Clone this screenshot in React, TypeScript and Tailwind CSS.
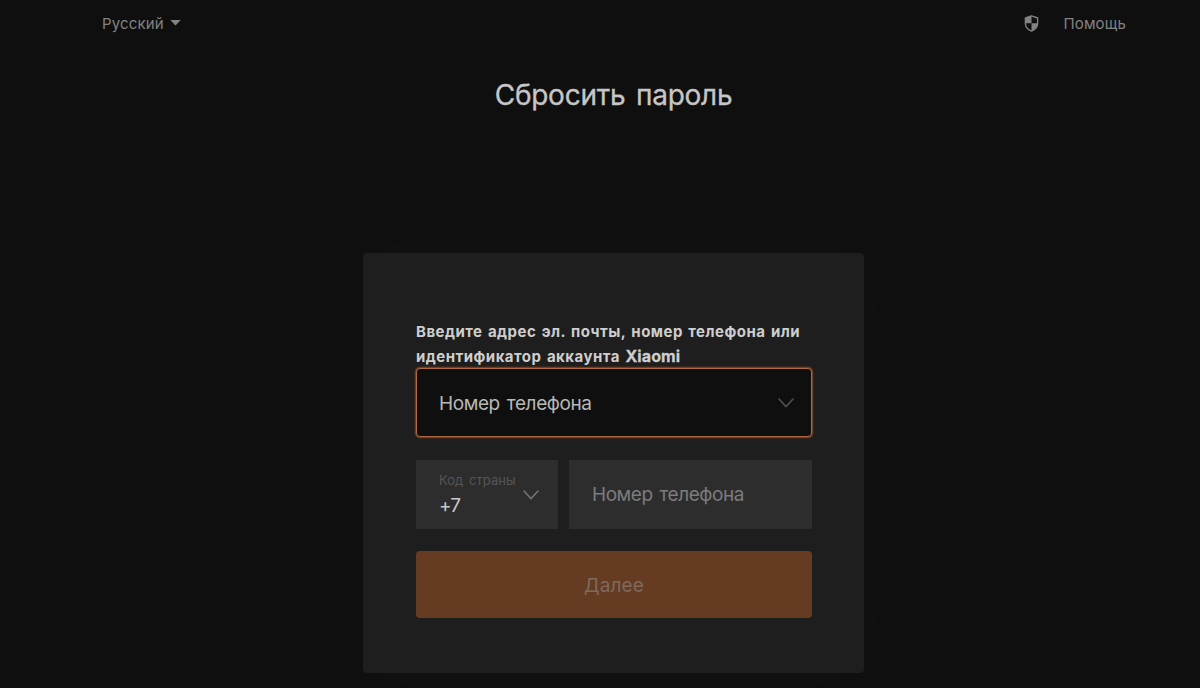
import React, { useState } from 'react';

const Chevron = () => (
  <svg
    width="16"
    height="10"
    viewBox="0 0 16 10"
    fill="none"
    stroke="currentColor"
    strokeWidth="1.6"
    strokeLinecap="round"
    strokeLinejoin="round"
  >
    <path d="M1 1L8 8.6L15 1" />
  </svg>
);

const ShieldIcon = () => (
  <svg className="relative -top-px" width="15" height="17" viewBox="0 0 14 17" fill="none">
    <path
      d="M7 0.9L13.1 3V8.4C13.1 12 10.4 14.7 7 16.1C3.6 14.7 0.9 12 0.9 8.4V3Z"
      stroke="currentColor"
      strokeWidth="1.4"
      strokeLinejoin="round"
    />
    <path d="M7 1V8.2H1V3Z" fill="currentColor" />
    <path d="M7 8.2H13.1C13 12 10.4 14.7 7 16Z" fill="currentColor" />
  </svg>
);

const Header = () => (
  <header className="flex h-12 items-center justify-between pl-[102px] pr-[74px] text-[15px] text-[#828282]">
    <button className="flex items-center gap-[6px] tracking-[0.15px]">
      <span>Русский</span>
      <svg className="relative -top-px" width="11" height="6" viewBox="0 0 11 6" fill="currentColor">
        <path d="M0.3 0H10.7L5.5 5.6Z" />
      </svg>
    </button>
    <div className="flex items-center gap-[24px]">
      <ShieldIcon />
      <a className="tracking-[0.15px]">Помощь</a>
    </div>
  </header>
);

export default function App() {
  const [phone, setPhone] = useState('');

  return (
    <div className="flex h-[688px] flex-col overflow-hidden bg-[#0f0f0f] font-['Inter','Liberation_Sans',sans-serif]">
      <Header />

      <h1 className="mt-7 pl-[27px] text-center text-[28px] leading-[38px] tracking-[-0.25px] text-[#c6c6c6] [word-spacing:3px] [-webkit-text-stroke:0.3px_#c6c6c6]">
        Сбросить пароль
      </h1>

      {/* Form card */}
      <main className="ml-[363px] mt-[139px] h-[420px] w-[501px] shrink-0 rounded-[4px] bg-[#1e1e1e] px-[53px] pt-[67px] shadow-[0_0_60px_rgba(255,255,255,0.025)]">
        <p className="whitespace-nowrap text-[15px] font-bold leading-6 tracking-[0.47px] text-[#cecece] [word-spacing:1.5px]">
          Введите адрес эл. почты, номер телефона или
          <br />
          идентификатор аккаунта{' '}
          <span className="text-[16px] tracking-[0.1px] [-webkit-text-stroke:0.3px_#cecece]">Xiaomi</span>
        </p>

        <button className="-mt-px flex h-[69px] w-[396px] items-center justify-between rounded-[4px] border border-[#b06a43] bg-[#0f0f0f] pl-[22px] pr-[17px] text-[19px] tracking-[-0.4px] text-[#b8b8b8] shadow-[0_0_0_1px_#6a3f28,0_0_0_2px_#38251b] [word-spacing:2px]">
          <span className="pt-[3px]">Номер телефона</span>
          <span className="text-[#505050]">
            <Chevron />
          </span>
        </button>

        <div className="mt-[23px] flex w-[396px] gap-[11px]">
          <button className="flex h-[69px] w-[142px] shrink-0 items-center justify-between bg-[#2d2d2d] pl-[23px] pr-[19px] text-left">
            <span className="flex flex-col whitespace-nowrap">
              <span className="text-[13px] leading-4 tracking-[0.05px] text-[#555555] [word-spacing:2px]">Код страны</span>
              <span className="mt-1.5 text-[19px] leading-6 tracking-[-0.8px] text-[#c8c8c8]">+7</span>
            </span>
            <span className="text-[#727272]">
              <Chevron />
            </span>
          </button>
          <input
            className="h-[69px] w-[243px] shrink-0 bg-[#2d2d2d] px-[23px] text-[19px] tracking-[-0.45px] text-[#c8c8c8] outline-none [word-spacing:2px] placeholder:text-[#7c7c7c]"
            placeholder="Номер телефона"
            value={phone}
            onChange={(e) => setPhone(e.target.value)}
          />
        </div>

        <button className="mt-[22px] h-[67px] w-[396px] rounded-[4px] bg-[#653b22] pt-[3px] text-[19px] tracking-[0.1px] text-[#7e6a5f]">
          Далее
        </button>
      </main>
    </div>
  );
}
